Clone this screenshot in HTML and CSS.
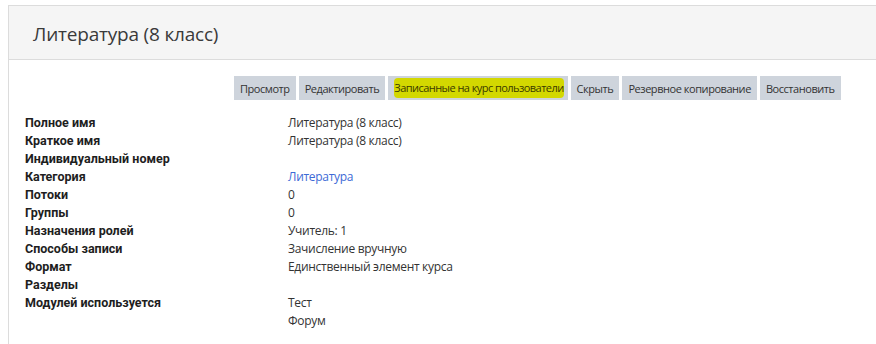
FILE: index.html
```html
<!DOCTYPE html>
<html lang="ru">
<head>
<meta charset="utf-8">
<title>Литература (8 класс)</title>
<link rel="stylesheet" href="styles.css">
</head>
<body>
<div class="panel">
  <div class="panel-head">
    <h1 class="title">Литература (8 класс)</h1>
  </div>
  <div class="panel-body">
    <div class="actions">
      <span class="btn">Просмотр</span>
      <span class="btn">Редактировать</span>
      <span class="btn btn-mark"><span class="mark">Записанные на курс пользователи</span></span>
      <span class="btn">Скрыть</span>
      <span class="btn">Резервное копирование</span>
      <span class="btn">Восстановить</span>
    </div>
    <div class="info">
      <div class="label">Полное имя</div><div class="value">Литература (8 класс)</div>
      <div class="label">Краткое имя</div><div class="value">Литература (8 класс)</div>
      <div class="label">Индивидуальный номер</div><div class="value"></div>
      <div class="label">Категория</div><div class="value"><a class="link" href="#">Литература</a></div>
      <div class="label">Потоки</div><div class="value">0</div>
      <div class="label">Группы</div><div class="value">0</div>
      <div class="label">Назначения ролей</div><div class="value">Учитель: 1</div>
      <div class="label">Способы записи</div><div class="value">Зачисление вручную</div>
      <div class="label">Формат</div><div class="value">Единственный элемент курса</div>
      <div class="label">Разделы</div><div class="value"></div>
      <div class="label">Модулей используется</div><div class="value"><div>Тест</div><div>Форум</div></div>
    </div>
  </div>
</div>
</body>
</html>
```

FILE: styles.css
```css
* { box-sizing: border-box; }
html, body { margin: 0; padding: 0; background: #fff; }
body {
  font-family: "Open Sans", "Noto Sans", sans-serif;
  color: #333;
  overflow: hidden;
}
.panel {
  margin: 5px 0 0 8px;
  border-top: 1px solid #dcdcdc;
  border-left: 1px solid #dcdcdc;
  min-height: 400px;
}
.panel-head {
  background: #f5f5f5;
  border-bottom: 1px solid #dcdcdc;
  height: 54px;
  display: flex;
  align-items: center;
  padding-left: 24px;
}
.title {
  margin: 0;
  font-size: 19px;
  font-weight: 400;
  color: #3a3a3a;
  letter-spacing: -0.2px;
  position: relative;
  top: 1px;
}
.panel-body {
  padding: 16px 0 0 16px;
}
.actions {
  display: flex;
  gap: 3px;
  padding-left: 209px;
}
.btn {
  display: inline-flex;
  align-items: center;
  height: 24px;
  padding: 0 6px;
  background: #ced4dc;
  font-size: 11px;
  color: #333;
  letter-spacing: -0.45px;
  white-space: nowrap;
}
.btn-mark { padding: 0 4px 0 6px; }
.mark {
  background: #d3d800;
  border-radius: 4px;
  padding: 2px 0 3px;
  color: #3a3a00;
  letter-spacing: -0.55px;
}
.info {
  display: grid;
  grid-template-columns: 263px 1fr;
  margin-top: 14px;
  font-size: 12px;
  line-height: 18px;
}
.label {
  font-family: Roboto, "Open Sans", sans-serif;
  font-weight: 700;
  font-size: 12.5px;
  color: #1e1e1e;
}
.value {
  color: #333;
  letter-spacing: -0.3px;
}
.link {
  color: #3d6ad6;
  text-decoration: none;
}
```
